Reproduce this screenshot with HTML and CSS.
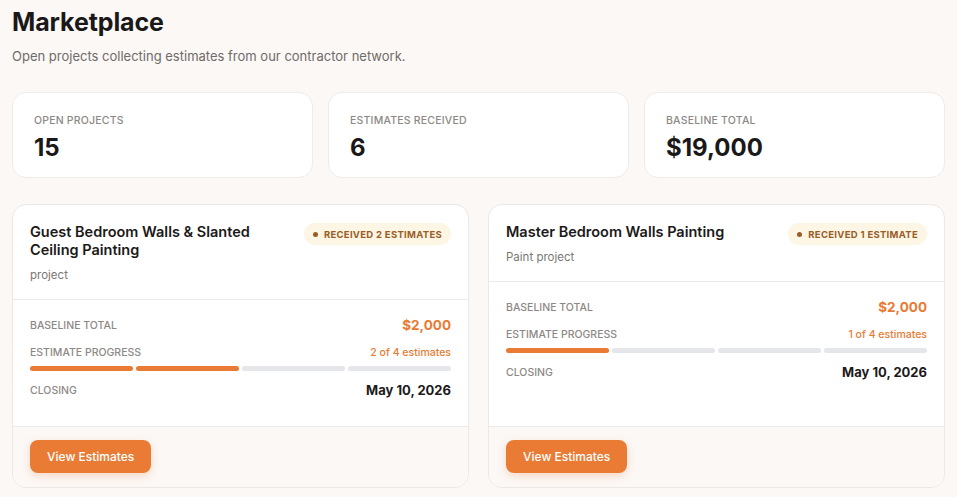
FILE: index.html
```html
<!DOCTYPE html>
<html lang="en">
<head>
<meta charset="utf-8">
<title>Marketplace</title>
<link rel="stylesheet" href="styles.css">
</head>
<body>
<main class="page">
  <h1 class="title">Marketplace</h1>
  <p class="subtitle">Open projects collecting estimates from our contractor network.</p>

  <section class="stats">
    <div class="stat">
      <div class="stat-label">Open Projects</div>
      <div class="stat-value">15</div>
    </div>
    <div class="stat">
      <div class="stat-label">Estimates Received</div>
      <div class="stat-value">6</div>
    </div>
    <div class="stat">
      <div class="stat-label">Baseline Total</div>
      <div class="stat-value">$19,000</div>
    </div>
  </section>

  <section class="projects">
    <article class="card">
      <div class="card-head">
        <div class="head-text">
          <h2 class="card-title">Guest Bedroom Walls &amp; Slanted Ceiling Painting</h2>
          <div class="card-sub">project</div>
        </div>
        <span class="badge"><span class="dot"></span>Received 2 estimates</span>
      </div>
      <div class="card-body">
        <div class="row">
          <span class="row-label">Baseline total</span>
          <span class="row-money">$2,000</span>
        </div>
        <div class="row row-progress">
          <span class="row-label">Estimate progress</span>
          <span class="row-count">2 of 4 estimates</span>
        </div>
        <div class="bars">
          <span class="bar on"></span><span class="bar on"></span><span class="bar"></span><span class="bar"></span>
        </div>
        <div class="row row-closing">
          <span class="row-label">Closing</span>
          <span class="row-date">May 10, 2026</span>
        </div>
      </div>
      <div class="card-foot">
        <button class="btn">View Estimates</button>
      </div>
    </article>

    <article class="card">
      <div class="card-head">
        <div class="head-text">
          <h2 class="card-title">Master Bedroom Walls Painting</h2>
          <div class="card-sub">Paint project</div>
        </div>
        <span class="badge"><span class="dot"></span>Received 1 estimate</span>
      </div>
      <div class="card-body">
        <div class="row">
          <span class="row-label">Baseline total</span>
          <span class="row-money">$2,000</span>
        </div>
        <div class="row row-progress">
          <span class="row-label">Estimate progress</span>
          <span class="row-count">1 of 4 estimates</span>
        </div>
        <div class="bars">
          <span class="bar on"></span><span class="bar"></span><span class="bar"></span><span class="bar"></span>
        </div>
        <div class="row row-closing">
          <span class="row-label">Closing</span>
          <span class="row-date">May 10, 2026</span>
        </div>
      </div>
      <div class="card-foot">
        <button class="btn">View Estimates</button>
      </div>
    </article>
  </section>
</main>
</body>
</html>
```

FILE: styles.css
```css
* { box-sizing: border-box; }

html, body {
  margin: 0;
  padding: 0;
  background: #fbf8f6;
  font-family: "Inter", "Noto Sans", sans-serif;
  color: #1c1a19;
}

.page {
  padding: 6px 12px 10px 12px;
}

.title {
  margin: 0;
  font-size: 25px;
  line-height: 32px;
  font-weight: 700;
  letter-spacing: -0.1px;
  color: #1a1818;
}

.subtitle {
  margin: 9px 0 0 0;
  font-size: 13px;
  line-height: 18px;
  color: #6f6b69;
}

.stats {
  display: grid;
  grid-template-columns: repeat(3, 1fr);
  gap: 15px;
  margin-top: 27px;
}

.stat {
  background: #fff;
  border: 1px solid #efebe8;
  border-radius: 14px;
  height: 86px;
  padding: 21px 21px 0 21px;
}

.stat-label {
  font-size: 10.5px;
  line-height: 14px;
  font-weight: 500;
  text-transform: uppercase;
  letter-spacing: 0.2px;
  color: #8d8885;
}

.stat-value {
  margin-top: 6px;
  font-size: 24px;
  line-height: 28px;
  font-weight: 700;
  color: #1a1818;
}

.projects {
  display: grid;
  grid-template-columns: 1fr 1fr;
  gap: 19px;
  margin-top: 26px;
}

.card {
  background: #fff;
  border: 1px solid #ece8e5;
  border-radius: 14px;
  height: 284px;
  display: flex;
  flex-direction: column;
  overflow: hidden;
}

.card-head {
  display: flex;
  justify-content: space-between;
  align-items: flex-start;
  gap: 16px;
  padding: 18px 17px 16px 17px;
  border-bottom: 1px solid #eeeae7;
}

.head-text {
  max-width: 250px;
}

.card-title {
  margin: 0;
  font-size: 14.5px;
  line-height: 18px;
  font-weight: 600;
  color: #1c1a19;
}

.card-sub {
  margin-top: 8px;
  font-size: 11.5px;
  line-height: 16px;
  color: #7b7774;
}

.badge {
  flex-shrink: 0;
  display: inline-flex;
  align-items: center;
  gap: 6px;
  height: 22px;
  padding: 0 9px;
  border-radius: 11px;
  background: #fdf6e5;
  color: #9a5d27;
  font-size: 9.5px;
  font-weight: 700;
  letter-spacing: 0.3px;
  text-transform: uppercase;
}

.dot {
  width: 5px;
  height: 5px;
  border-radius: 50%;
  background: #9a5d27;
}

.card-body {
  flex: 1;
  padding: 15px 17px 0 17px;
}

.row {
  display: flex;
  justify-content: space-between;
  align-items: center;
  height: 20px;
}

.row-progress {
  margin-top: 7px;
}

.row-closing {
  margin-top: 9px;
}

.row-label {
  font-size: 10.5px;
  font-weight: 500;
  text-transform: uppercase;
  color: #8d8885;
}

.row-money {
  font-size: 13.5px;
  font-weight: 700;
  color: #e97b35;
}

.row-count {
  font-size: 10.5px;
  font-weight: 500;
  color: #e97b35;
}

.row-date {
  font-size: 13px;
  font-weight: 700;
  color: #1c1a19;
}

.bars {
  display: grid;
  grid-template-columns: repeat(4, 1fr);
  gap: 3px;
  margin-top: 4px;
}

.bar {
  height: 5px;
  border-radius: 3px;
  background: #e5e6e9;
}

.bar.on {
  background: #e97b35;
}

.card-foot {
  border-top: 1px solid #eeeae7;
  background: #fcf8f6;
  padding: 13px 17px 14px 17px;
}

.btn {
  display: inline-flex;
  align-items: center;
  justify-content: center;
  height: 33px;
  padding: 0 17px;
  border: none;
  border-radius: 8px;
  background: #e97b35;
  color: #fff;
  font-family: inherit;
  font-size: 12px;
  font-weight: 500;
  box-shadow: 0 3px 8px rgba(233, 123, 53, 0.25);
}
```
